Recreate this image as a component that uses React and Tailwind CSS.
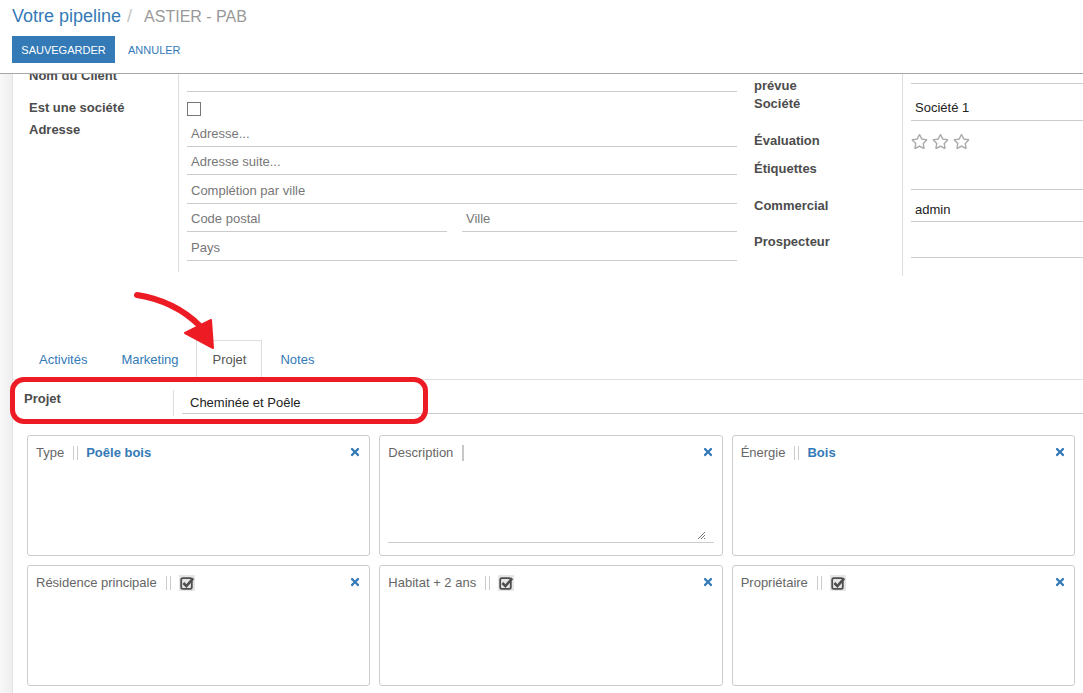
import React from 'react';
import { FaTimes, FaRegStar } from 'react-icons/fa';

const Checked = () => (
  <span className="ml-[8px] grid h-[16px] w-[16px] place-items-center bg-[#e6e6e6]">
    <svg width="16" height="16" viewBox="0 0 16 16" aria-hidden="true">
      <rect x="2.2" y="3.2" width="10.6" height="10.6" rx="1.6" fill="none" stroke="#4f4f4f" strokeWidth="1.8" />
      <path d="M4.4 8 L7.4 11.1 L14.2 3.4" fill="none" stroke="#4f4f4f" strokeWidth="2.6" />
    </svg>
  </span>
);

const Bars = ({ single }) =>
  single ? (
    <span className="ml-[9px] h-[16px] w-[2px] bg-[#c8c8c8]" />
  ) : (
    <span className="ml-[9px] flex h-[14px] gap-[3px]">
      <span className="w-px bg-[#ccc]" />
      <span className="w-px bg-[#ccc]" />
    </span>
  );

const Card = ({ label, value, checked, textarea }) => (
  <div className="relative h-[121px] rounded-[3px] border border-[#ccc] bg-white px-[8px] pt-[8px]">
    <div className="flex h-[18px] items-center">
      <span className="text-[#666]">{label}</span>
      <Bars single={textarea} />
      {value && <span className="ml-[8px] font-bold text-[#337ab7]">{value}</span>}
      {checked && <Checked />}
      <FaTimes className="ml-auto mt-[-3px] text-[#337ab7]" size={12} />
    </div>
    {textarea && (
      <div className="relative mt-[63px] h-[18px] border-b border-[#ccc]">
        <svg className="absolute bottom-[2px] right-[8px]" width="9" height="9" viewBox="0 0 9 9">
          <path d="M1 8 L8 1 M4 8 L8 4 M7 8 L8 7" stroke="#777" strokeWidth="1" />
        </svg>
      </div>
    )}
  </div>
);

const Input = ({ h, text, value, className = '' }) => (
  <div className={`flex items-center border-b border-[#ccc] pl-[4px] pt-[3px] ${h} ${className}`}>
    {text && <span className="text-[#777]">{text}</span>}
    {value && <span className="text-[#222]">{value}</span>}
  </div>
);

export default function App() {
  return (
    <div className="relative h-[693px] w-[1083px] overflow-hidden bg-white font-['Liberation_Sans',Arial,sans-serif] text-[13px] leading-[18px] text-[#4c4c4c]">
      <header className="relative z-10 h-[74px] border-b border-[#a8a8a8] bg-white px-[12px] pt-[6px]">
        <div className="flex items-baseline leading-[20px]">
          <span className="text-[18px] text-[#337ab7]">Votre pipeline</span>
          <span className="ml-[6px] text-[18px] text-[#c4c4c4]">/</span>
          <span className="ml-[12px] text-[16px] text-[#999]">ASTIER - PAB</span>
        </div>
        <div className="mt-[9px] flex items-center">
          <button className="h-[27px] w-[103px] bg-[#337ab7] text-[11px] text-white">SAUVEGARDER</button>
          <button className="ml-[13px] text-[11px] text-[#337ab7]">ANNULER</button>
        </div>
      </header>

      <div className="flex h-[619px]">
        <div className="w-[13px] shrink-0 border-r border-[#e2e2e2] bg-gradient-to-r from-[#f8f8f8] to-[#eeeeee]" />
        <main className="min-w-0 flex-1 overflow-hidden">
          <div className="-mt-[16px]">
            {/* top form */}
            <div className="flex items-start">
              <div className="w-[724px] shrink-0 pt-[4px] font-normal">
                <div className="flex">
                  <div className="h-[30px] w-[166px] border-r border-[#ddd] pl-[16px] pt-[5px] font-bold">Nom du Client</div>
                  <div className="flex-1 pl-[8px]">
                    <div className="h-[30px] border-b border-[#ccc]" />
                  </div>
                </div>
                <div className="flex">
                  <div className="h-[26px] w-[166px] border-r border-[#ddd] pl-[16px] pt-[7px] font-bold">Est une société</div>
                  <div className="flex-1 pl-[8px] pt-[10px]">
                    <div className="h-[14px] w-[14px] border border-[#777]" />
                  </div>
                </div>
                <div className="flex">
                  <div className="w-[166px] border-r border-[#ddd] pl-[16px] pt-[3px] font-bold">Adresse</div>
                  <div className="flex-1 pl-[8px] pb-[11px]">
                    <Input h="h-[29px]" text="Adresse..." />
                    <Input h="h-[28px]" text="Adresse suite..." />
                    <Input h="h-[29px]" text="Complétion par ville" />
                    <div className="flex gap-[15px]">
                      <Input h="h-[28px]" text="Code postal" className="w-[260px]" />
                      <Input h="h-[28px]" text="Ville" className="flex-1" />
                    </div>
                    <Input h="h-[29px]" text="Pays" />
                  </div>
                </div>
              </div>

              <div className="min-w-0 flex-1 pl-[8px]">
                <div className="flex">
                  <div className="h-[34px] w-[158px] shrink-0 border-r border-[#ddd] pl-[9px] pt-[1px] font-bold">
                    Date de clôture<br />prévue
                  </div>
                  <div className="flex-1 pl-[8px]"><div className="h-[26px] border-b border-[#ccc]" /></div>
                </div>
                <div className="flex">
                  <div className="h-[29px] w-[158px] shrink-0 border-r border-[#ddd] pl-[9px] pt-[3px] font-bold">Société</div>
                  <div className="flex-1 pl-[8px]"><Input h="h-[29px]" value="Société 1" /></div>
                </div>
                <div className="flex">
                  <div className="h-[34px] w-[158px] shrink-0 border-r border-[#ddd] pl-[9px] pt-[11px] font-bold">Évaluation</div>
                  <div className="flex flex-1 gap-[4px] pl-[8px] pt-[12px] text-[#aaa]">
                    <FaRegStar size={17} />
                    <FaRegStar size={17} />
                    <FaRegStar size={17} />
                  </div>
                </div>
                <div className="flex">
                  <div className="h-[35px] w-[158px] shrink-0 border-r border-[#ddd] pl-[9px] pt-[5px] font-bold">Étiquettes</div>
                  <div className="flex-1 pl-[8px]"><div className="h-[35px] border-b border-[#ccc]" /></div>
                </div>
                <div className="flex">
                  <div className="h-[32px] w-[158px] shrink-0 border-r border-[#ddd] pl-[9px] pt-[7px] font-bold">Commercial</div>
                  <div className="flex-1 pl-[8px]">
                    <div className="h-[32px] border-b border-[#ccc] pl-[4px] pt-[11px] text-[#222]">admin</div>
                  </div>
                </div>
                <div className="flex">
                  <div className="h-[54px] w-[158px] shrink-0 border-r border-[#ddd] pl-[9px] pt-[11px] font-bold">Prospecteur</div>
                  <div className="flex-1 pl-[8px]"><div className="h-[36px] border-b border-[#ccc]" /></div>
                </div>
              </div>
            </div>

            {/* tabs */}
            <ul className="mt-[64px] flex border-b border-[#ddd] pl-[10px]">
              {['Activités', 'Marketing', 'Projet', 'Notes'].map((t) => (
                <li key={t} className="-mb-px mr-[2px]">
                  <span
                    className={
                      t === 'Projet'
                        ? 'flex h-[40px] items-center border border-[#ddd] border-b-white bg-white px-[15px] text-[#555]'
                        : 'flex h-[40px] items-center border border-transparent px-[15px] text-[#337ab7]'
                    }
                  >
                    {t}
                  </span>
                </li>
              ))}
            </ul>

            {/* projet field */}
            <div className="flex h-[36px]">
              <div className="w-[160px] shrink-0 pl-[11px] pt-[10px] font-bold">Projet</div>
              <div className="mt-[10px] w-px bg-[#ddd]" />
              <div className="flex-1 pl-[8px]">
                <div className="h-[34px] border-b border-[#ccc] pl-[8px] pt-[14px] text-[#222]">Cheminée et Poêle</div>
              </div>
            </div>

            {/* cards */}
            <div className="mt-[19px] grid grid-cols-3 gap-[9px] pl-[14px] pr-[8px]">
              <Card label="Type" value="Poêle bois" />
              <Card label="Description" textarea />
              <Card label="Énergie" value="Bois" />
              <Card label="Résidence principale" checked />
              <Card label="Habitat + 2 ans" checked />
              <Card label="Propriétaire" checked />
            </div>
          </div>
        </main>
      </div>

      {/* annotation overlay */}
      <div className="pointer-events-none absolute left-[10px] top-[377px] h-[47px] w-[418px] rounded-[14px] border-[5px] border-[#ed1c24]" />
      <svg className="pointer-events-none absolute left-0 top-0" width="1083" height="693" aria-hidden="true">
        <path d="M137 295 Q175 301 200 326" fill="none" stroke="#ed1c24" strokeWidth="6" strokeLinecap="round" />
        <path d="M185 333 L211 320 L213 348 Z" fill="#ed1c24" stroke="#ed1c24" strokeWidth="2" strokeLinejoin="round" />
      </svg>
    </div>
  );
}
